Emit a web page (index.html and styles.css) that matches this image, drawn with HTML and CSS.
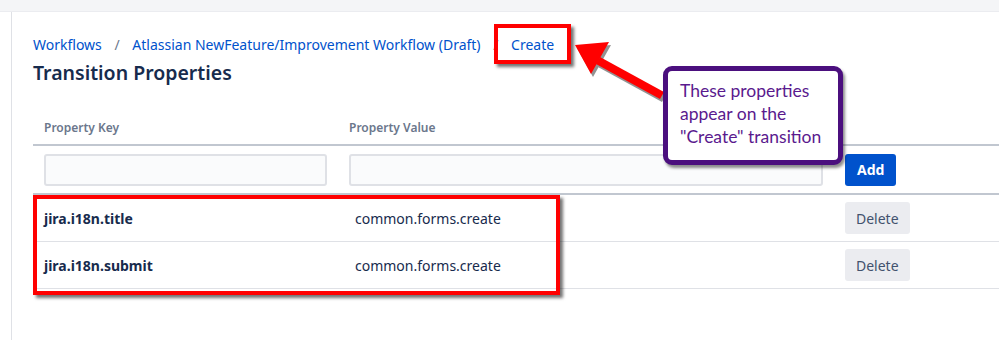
FILE: index.html
```html
<!DOCTYPE html>
<html lang="en">
<head>
  <meta charset="UTF-8" />
  <title>Transition Properties</title>
  <link rel="stylesheet" href="styles.css">
</head>
<body>
  <div class="top-bar"></div>

  <div class="page">
    <div class="content">
      <nav class="breadcrumbs">
        <a href="#">Workflows</a>
        <span class="sep">/</span>
        <a href="#">Atlassian NewFeature/Improvement Workflow (Draft)</a>
        <span class="sep">/</span>
        <a href="#">Create</a>
      </nav>
      <h1>Transition Properties</h1>

      <div class="props">
        <div class="row head">
          <div class="cell">Property Key</div>
          <div class="cell">Property Value</div>
          <div class="cell"></div>
        </div>
        <div class="row add-row">
          <div class="cell"><input type="text" class="field"></div>
          <div class="cell"><input type="text" class="field"></div>
          <div class="cell"><button class="btn primary">Add</button></div>
        </div>
        <div class="row item">
          <div class="cell key">jira.i18n.title</div>
          <div class="cell value">common.forms.create</div>
          <div class="cell"><button class="btn">Delete</button></div>
        </div>
        <div class="row item">
          <div class="cell key">jira.i18n.submit</div>
          <div class="cell value">common.forms.create</div>
          <div class="cell"><button class="btn">Delete</button></div>
        </div>
      </div>
    </div>
  </div>

  <!-- annotations drawn over the screenshot -->
  <div class="mark mark-crumb"></div>
  <div class="mark mark-rows"></div>
  <svg class="arrow" width="999" height="340" viewBox="0 0 999 340">
    <g transform="translate(2,3)" fill="#3a3a3a" opacity="0.55">
      <path d="M664 92 L600 57 L596 64 L660 99 Z"/>
      <path d="M575 45 L609 42 L591 74 Z"/>
    </g>
    <path d="M664 92 L600 57 L596 64 L660 99 Z" fill="#ff0000"/>
    <path d="M575 45 L609 42 L591 74 Z" fill="#ff0000"/>
  </svg>
  <div class="callout">These properties appear on the "Create" transition</div>
</body>
</html>
```

FILE: styles.css
```css
html, body {
  margin: 0;
  padding: 0;
  background: #fff;
  font-family: "Noto Sans", "Open Sans", sans-serif;
  color: #172b4d;
}

.top-bar {
  height: 11px;
  background: #f4f5f7;
  border-bottom: 1px solid #ebecf0;
}

.page {
  margin-left: 11px;
  border-left: 1px solid #dfe1e6;
  height: 328px;
  overflow: hidden;
}

.content {
  padding: 23px 0 0 21px;
}

.breadcrumbs {
  font-size: 14px;
  line-height: 20px;
  color: #6b778c;
}

.breadcrumbs a {
  color: #0052cc;
  text-decoration: none;
}

.breadcrumbs .sep {
  margin: 0 9px;
}

h1 {
  margin: 5px 0 0;
  font-size: 19.5px;
  font-weight: 600;
  line-height: 26px;
  color: #172b4d;
}

/* PROPERTIES TABLE */
.props {
  margin-top: 25px;
}

.row {
  display: grid;
  grid-template-columns: 305px 496px 1fr;
  align-items: center;
}

.cell {
  padding: 0 11px;
}

.row.head {
  height: 33px;
  border-bottom: 2px solid #c1c7d0;
  font-size: 12px;
  font-weight: 600;
  color: #6b778c;
}

.row.add-row {
  height: 47px;
  border-bottom: 2px solid #c1c7d0;
}

.row.item {
  height: 46px;
  border-bottom: 1px solid #dfe1e6;
  font-size: 14px;
}

.cell.key {
  font-weight: 700;
}

.cell.value {
  padding-left: 17px;
}

.field {
  box-sizing: border-box;
  width: 100%;
  height: 32px;
  background: #fafbfc;
  border: 2px solid #dfe1e6;
  border-radius: 3px;
}

.add-row .cell:nth-child(2) .field {
  width: 474px;
}

.btn {
  height: 32px;
  padding: 0 11px;
  border: none;
  border-radius: 3px;
  background: #ebecf0;
  color: #42526e;
  font-family: inherit;
  font-size: 14px;
}

.btn.primary {
  background: #0052cc;
  color: #fff;
  font-weight: 700;
  padding: 0 12px;
}

/* ANNOTATIONS */
.mark {
  position: absolute;
  border: 4px solid #ff0000;
  box-shadow: 3px 3px 3px rgba(0, 0, 0, 0.55);
}

.mark-crumb {
  left: 494px;
  top: 24px;
  width: 69px;
  height: 32px;
}

.mark-rows {
  left: 33px;
  top: 195px;
  width: 519px;
  height: 92px;
}

.arrow {
  position: absolute;
  left: 0;
  top: 0;
}

.callout {
  position: absolute;
  left: 663px;
  top: 66px;
  box-sizing: border-box;
  width: 180px;
  height: 99px;
  padding: 8px 8px 0 12px;
  background: #fff;
  border: 5px solid #4b0f7e;
  border-radius: 9px;
  box-shadow: 2px 3px 3px rgba(0, 0, 0, 0.45);
  font-family: Lato, "Liberation Sans", sans-serif;
  font-size: 17.5px;
  line-height: 23px;
  color: #5a1a8e;
}
```
